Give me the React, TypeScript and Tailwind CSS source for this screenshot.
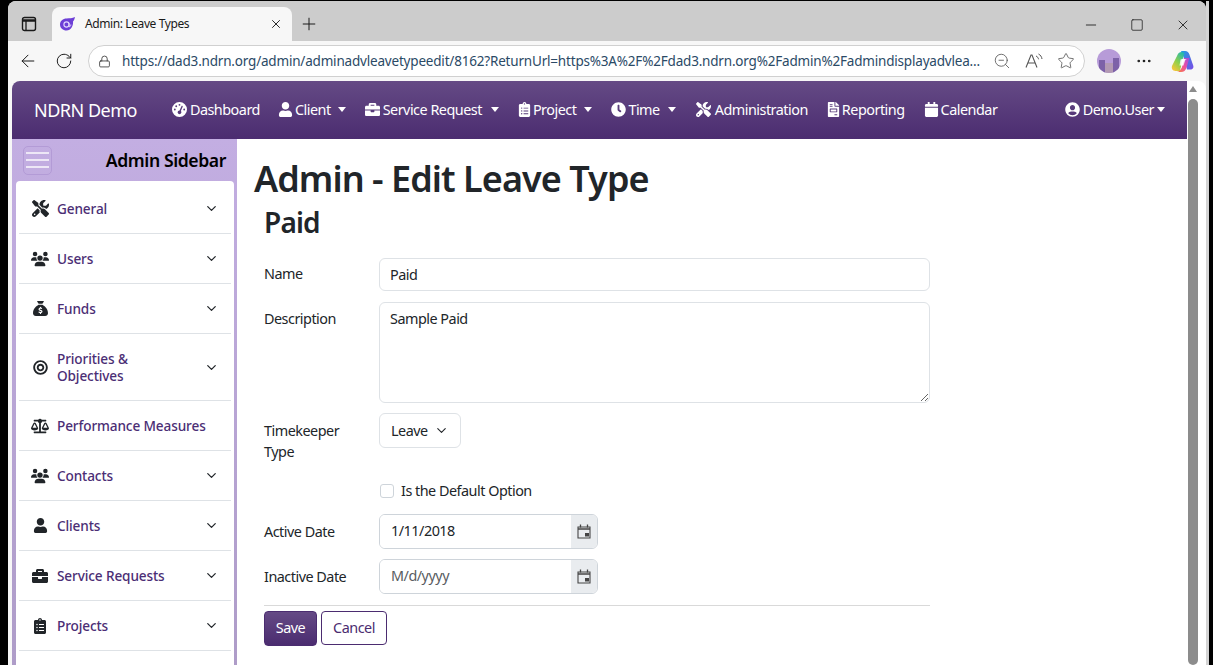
import { ReactNode } from 'react';
import { ArrowLeft, ChevronDown, MoreHorizontal, Plus, RotateCw, Star, X, ZoomOut, Minus, Square, Lock } from 'lucide-react';
import { FaBalanceScale, FaBullseye, FaCalendar, FaClipboardList, FaClock, FaFileInvoice, FaUser, FaUserCircle, FaBriefcase } from 'react-icons/fa';
import { FaGaugeHigh, FaSackDollar, FaScrewdriverWrench, FaUsers } from 'react-icons/fa6';

const font = "font-['Noto_Sans','Open_Sans',sans-serif]";

function Caret({ className }: { className: string }) {
  return <span className={`h-0 w-0 border-x-[4px] border-t-[5px] border-x-transparent border-t-white ${className}`} />;
}

function NavItem({
  icon,
  label,
  caret,
  className,
  iconWidth,
  caretClass = 'ml-[5px]'
}: {
  icon: ReactNode;
  label: string;
  caret?: boolean;
  className: string;
  iconWidth: string;
  caretClass?: string;
}) {
  return (
    <a className={`flex items-center gap-[3px] text-[14.4px] tracking-[-0.5px] text-white ${className}`}>
      <span className={`flex justify-center text-[15px] [&>svg]:shrink-0 ${iconWidth}`}>{icon}</span>
      {label}
      {caret ? <Caret className={caretClass} /> : null}
    </a>
  );
}

function SideItem({
  icon,
  label,
  tall,
  noChevron,
  iconSize = 'text-[15px]',
  className = ''
}: {
  icon: ReactNode;
  label: ReactNode;
  tall?: boolean;
  noChevron?: boolean;
  iconSize?: string;
  className?: string;
}) {
  return (
    <div className={`flex shrink-0 items-center border-b border-[#dee2e6] pl-[12px] pr-[12px] ${tall ? 'h-[67px]' : 'h-[50px]'} ${className}`}>
      <span className={`flex w-[18px] justify-center text-[#212529] [&>svg]:shrink-0 ${iconSize}`}>{icon}</span>
      <span className="ml-[8px] flex-1 text-[13.6px] leading-[17px] font-medium tracking-[-0.12px] text-[#4b2e75]">{label}</span>
      {noChevron ? null : <ChevronDown size={15} strokeWidth={2} className="text-[#212529]" />}
    </div>
  );
}

function CalendarIcon() {
  return (
    <svg width="14" height="15" viewBox="0 0 14 15" className="text-[#444]">
      <path d="M1 3h12v11H1z" fill="none" stroke="currentColor" strokeWidth="1.100" />
      <path d="M1 5h12" stroke="currentColor" strokeWidth="1.500" />
      <path d="M3.500 0.500v3M10.500 0.500v3" stroke="currentColor" strokeWidth="1.300" />
      <rect x="8" y="9" width="4" height="3.500" fill="currentColor" />
    </svg>
  );
}

function DateField({ label, value, muted }: { label: string; value: string; muted?: boolean }) {
  return (
    <div className="flex items-center">
      <label className="w-[115px] pt-[1px] text-[14.4px] tracking-[-0.5px] text-[#212529]">{label}</label>
      <div className="flex h-[35px] w-[219px] overflow-hidden rounded-[6px] border border-[#ced4da]">
        <input
          readOnly
          value={value}
          className={`min-w-0 flex-1 bg-white pl-[11px] text-[14.4px] tracking-[-0.5px] outline-none ${muted ? 'text-[#595c5f]' : 'text-[#212529]'}`}
        />
        <span className="flex w-[26px] items-center justify-center bg-[#e9ecef]">
          <CalendarIcon />
        </span>
      </div>
    </div>
  );
}

export default function App() {
  return (
    <div className={`flex h-[665px] w-[1213px] overflow-hidden bg-black pl-2 pt-px ${font}`}>
      <div className="flex h-[664px] w-[1198px] flex-col overflow-hidden rounded-tl-[8px] rounded-tr-[8px] bg-[#f7f7f7]">
        {/* tab strip */}
        <div className="flex h-[40px] shrink-0 items-end bg-[#cccccc] pl-[13px]">
          <svg width="16" height="16" viewBox="0 0 16 16" className="mb-[9px] text-[#1a1a1a]">
            <rect x="1.500" y="1.500" width="13" height="13" rx="2" fill="none" stroke="currentColor" strokeWidth="1.400" />
            <path d="M1.500 4.500h13" stroke="currentColor" strokeWidth="2.500" />
            <path d="M5 5v9" stroke="currentColor" strokeWidth="1.300" />
          </svg>
          <div className="ml-[15px] flex h-[34px] w-[240px] items-center rounded-t-[8px] bg-[#f7f7f7] pl-[8px] pr-[9px]">
            <svg width="15" height="14" viewBox="0 0 15 14">
              <path d="M6.500 1.500C10 1 12 1.500 15 0c-.5 2.500-1 3.500-2 4.500.6 4-2 9-6.500 9C3 13.500 0 11 0 7.500S3 1.500 6.500 1.500z" fill="#6d3fd6" />
              <circle cx="6.500" cy="7.500" r="2.600" fill="none" stroke="#e4d8ff" strokeWidth="1.100" />
              <path d="M9 6v3.500c1 .5 1.800-.4 1.800-2" fill="none" stroke="#e4d8ff" strokeWidth="1" />
            </svg>
            <span className="ml-[10px] flex-1 text-[12px] tracking-[-0.4px] text-[#1a1a1a]">Admin: Leave Types</span>
            <X size={14} strokeWidth={1.6} className="text-[#1a1a1a]" />
          </div>
          <Plus size={20} strokeWidth={1.2} className="mb-[7px] ml-[7px] text-[#1a1a1a]" />
          <div className="mb-[8px] ml-auto flex items-center gap-[31px] pr-[15px] text-[#1a1a1a]">
            <Minus size={16} strokeWidth={1.3} />
            <Square size={14} strokeWidth={1.3} />
            <X size={16} strokeWidth={1.3} />
          </div>
        </div>
        {/* address bar */}
        <div className="flex h-[40px] shrink-0 items-center pl-[10px]">
          <ArrowLeft size={20} strokeWidth={1.2} className="text-[#1a1a1a]" />
          <RotateCw size={18} strokeWidth={1.3} className="ml-[17px] text-[#1a1a1a]" />
          <div className="ml-[15px] flex h-[32px] w-[997px] items-center rounded-full border border-[#d0d0d0] bg-white pl-[9px]">
            <Lock size={13} strokeWidth={1.5} className="text-[#333]" />
            <span className="ml-[11px] w-[869px] whitespace-nowrap text-[13.5px] tracking-[-0.19px] text-[#2b4a66]">
              https://dad3.ndrn.org/admin/adminadvleavetypeedit/8162?ReturnUrl=https%3A%2F%2Fdad3.ndrn.org%2Fadmin%2Fadmindisplayadvlea...
            </span>
            <ZoomOut size={18} strokeWidth={1.1} className="ml-[2px] text-[#555]" />
            <svg width="18" height="16" viewBox="0 0 18 16" className="ml-[14px] text-[#555]">
              <path d="M1 14.500 6 2h1l5 12.500M3 10h7" fill="none" stroke="currentColor" strokeWidth="1.100" />
              <path d="M11 3c1.500.7 2.300 1.800 2.600 3.300M13.500 1c2 1 3.200 2.800 3.500 5" fill="none" stroke="currentColor" strokeWidth="1" />
            </svg>
            <Star size={18} strokeWidth={1.1} className="ml-[14px] text-[#555]" />
          </div>
          <div className="ml-[12px] flex h-[24px] w-[24px] items-end justify-center overflow-hidden rounded-full bg-[#b79bd8]">
            <span className="mb-0 h-[13px] w-[6px] bg-[#7d62a8]" />
            <span className="h-[10px] w-[8px] bg-[#b39ab4]" />
            <span className="h-[15px] w-[6px] bg-[#7d62a8]" />
          </div>
          <MoreHorizontal size={18} strokeWidth={1.600} className="ml-[14px] text-[#222]" />
          <svg width="23" height="23" viewBox="0 0 23 23" className="ml-[18px]">
            <defs>
              <linearGradient id="cpa" x1="0" y1="0" x2="1" y2="1">
                <stop offset="0" stopColor="#1f9fe0" />
                <stop offset="1" stopColor="#7a4be6" />
              </linearGradient>
              <linearGradient id="cpb" x1="0.800" y1="0" x2="0.200" y2="1">
                <stop offset="0" stopColor="#22b8b0" />
                <stop offset="0.550" stopColor="#8fd04a" />
                <stop offset="1" stopColor="#f8c53a" />
              </linearGradient>
              <linearGradient id="cpc" x1="0" y1="1" x2="1" y2="0">
                <stop offset="0" stopColor="#f9853a" />
                <stop offset="0.500" stopColor="#ee4f9f" />
                <stop offset="1" stopColor="#a04be0" />
              </linearGradient>
            </defs>
            <path d="M10 1h4c2.500 0 3.600 1.200 4.400 3.500l3.800 11c.8 2.400-.6 4-2.800 4H16L12.500 7z" fill="url(#cpa)" />
            <path d="M11 2C8 2 7 3.500 6 6L1.200 15.500C0 18 1.500 21 4.500 21H9l3-13 1.500-5z" fill="url(#cpb)" />
            <path d="M13 8h5.500l-3 9.500C14.500 20.500 13 22 10 22H6c2.500-.5 3.800-2 4.600-5z" fill="url(#cpc)" />
            <path d="M10.500 9h5.500c-2 .3-3 1.500-3.600 3.500L11 17c-.4 1.300-1 2-2 2.400 1-.9 1-2 1.300-3z" fill="#fff" fillOpacity="0.900" />
            <path d="M9.500 9.500h5l-2 6h-4z" fill="#fff" fillOpacity="0.800" />
          </svg>
        </div>
        {/* page */}
        <div className="ml-1 flex min-h-0 flex-1 overflow-hidden rounded-tl-[8px] rounded-tr-[8px] bg-white">
          <div className="flex w-[1175px] shrink-0 flex-col">
            <header className="flex h-[58px] shrink-0 items-center bg-gradient-to-b from-[#654a85] to-[#4b2c70] pl-[22px] text-white">
              <span className="text-[18px] tracking-[-0.5px]">NDRN Demo</span>
              <NavItem className="ml-[35px]" iconWidth="w-[15px]" icon={<FaGaugeHigh />} label="Dashboard" />
              <NavItem className="ml-[20px]" iconWidth="w-[12px]" caretClass="ml-[4px]" icon={<FaUser />} label="Client" caret />
              <NavItem className="ml-[20px]" iconWidth="w-[14px]" caretClass="ml-[6px]" icon={<FaBriefcase />} label="Service Request" caret />
              <NavItem className="ml-[20px]" iconWidth="w-[11px]" icon={<FaClipboardList />} label="Project" caret />
              <NavItem className="ml-[20px]" iconWidth="w-[13px]" icon={<FaClock />} label="Time" caret />
              <NavItem className="ml-[20px]" iconWidth="w-[16px]" icon={<FaScrewdriverWrench />} label="Administration" />
              <NavItem className="ml-[20px]" iconWidth="w-[11px]" icon={<FaFileInvoice />} label="Reporting" />
              <NavItem className="ml-[21px]" iconWidth="w-[12px]" icon={<FaCalendar />} label="Calendar" />
              <NavItem className="ml-auto mr-[22px]" iconWidth="w-[15px]" caretClass="ml-0" icon={<FaUserCircle />} label="Demo.User" caret />
            </header>
            <div className="flex min-h-0 flex-1">
              <aside className="flex w-[225px] shrink-0 flex-col bg-gradient-to-b from-[#c3aee2] to-[#ae9cc8] pl-1 pr-[3px]">
                <div className="flex h-[42px] shrink-0 items-center justify-between pl-[7px] pr-[8px]">
                  <span className="flex h-[29px] w-[29px] flex-col items-center justify-center gap-[5px] rounded-[5px] border border-[#b39bd6]">
                    <span className="h-[2px] w-[23px] bg-white/70" />
                    <span className="h-[2px] w-[23px] bg-white/70" />
                    <span className="h-[2px] w-[23px] bg-white/70" />
                  </span>
                  <span className="text-[17.6px] font-semibold tracking-[-0.4px] text-black">Admin Sidebar</span>
                </div>
                <nav className="flex min-h-0 flex-1 flex-col overflow-hidden rounded-t-[4px] bg-white px-[3px]">
                  <SideItem className="!h-[53px] pt-[3px]" iconSize="text-[17px]" icon={<FaScrewdriverWrench />} label="General" />
                  <SideItem iconSize="text-[18px]" icon={<FaUsers />} label="Users" />
                  <SideItem icon={<FaSackDollar />} label="Funds" />
                  <SideItem tall icon={<FaBullseye />} label={<>Priorities &amp;<br />Objectives</>} />
                  <SideItem noChevron iconSize="text-[18px]" icon={<FaBalanceScale />} label="Performance Measures" />
                  <SideItem iconSize="text-[18px]" icon={<FaUsers />} label="Contacts" />
                  <SideItem icon={<FaUser />} label="Clients" />
                  <SideItem iconSize="text-[16px]" icon={<FaBriefcase />} label="Service Requests" />
                  <SideItem iconSize="text-[16px]" icon={<FaClipboardList />} label="Projects" />
                </nav>
              </aside>
              <main className="min-w-0 flex-1 pl-[17px] text-[#212529]">
                <h1 className="mt-[15px] text-[36px] leading-[49px] font-semibold tracking-[-0.95px]">Admin - Edit Leave Type</h1>
                <div className="ml-[10px] w-[666px]">
                  <h2 className="text-[28px] leading-[38px] font-semibold tracking-[-0.8px]">Paid</h2>
                  <div className="mt-[17px] flex items-center">
                    <label className="w-[115px] pb-[2px] text-[14.4px] tracking-[-0.5px]">Name</label>
                    <input readOnly value="Paid" className="h-[33px] w-[551px] rounded-[6px] border border-[#dee2e6] pb-[1px] pl-[10px] text-[14.4px] tracking-[-0.5px] outline-none" />
                  </div>
                  <div className="mt-[11px] flex items-start">
                    <label className="w-[115px] pt-[6px] text-[14.4px] tracking-[-0.5px]">Description</label>
                    <textarea readOnly value="Sample Paid" className="h-[101px] w-[551px] rounded-[6px] border border-[#dee2e6] pl-[10px] pt-[5px] text-[14.4px] tracking-[-0.5px] outline-none" />
                  </div>
                  <div className="mt-[10px] flex items-start">
                    <label className="w-[115px] pt-[7px] text-[14.4px] leading-[21px] tracking-[-0.5px]">Timekeeper<br />Type</label>
                    <div className="flex h-[35px] w-[82px] items-center justify-between rounded-[6px] border border-[#dee2e6] pl-[11px] pr-[11px] text-[14.4px] tracking-[-0.5px]">
                      Leave
                      <ChevronDown size={15} strokeWidth={1.8} />
                    </div>
                  </div>
                  <div className="ml-[116px] mt-[18px] flex items-center">
                    <input type="checkbox" readOnly className="h-[14px] w-[14px] appearance-none rounded-[3px] border border-[#ced4da] bg-white" />
                    <span className="ml-[7px] text-[14.4px] tracking-[-0.5px]">Is the Default Option</span>
                  </div>
                  <div className="mt-[12px] flex flex-col gap-[10px]">
                    <DateField label="Active Date" value="1/11/2018" />
                    <DateField label="Inactive Date" value="M/d/yyyy" muted />
                  </div>
                  <hr className="mt-[11px] border-[#d9d9d9]" />
                  <div className="mt-[5px] flex items-start gap-1">
                    <button className="h-[35px] w-[53px] rounded-[4px] border border-[#4b2c70] bg-gradient-to-b from-[#654a85] to-[#4b2c70] text-[14.4px] tracking-[-0.5px] text-white">Save</button>
                    <button className="h-[34px] w-[66px] rounded-[4px] border border-[#4b2c70] bg-white text-[14.4px] tracking-[-0.5px] text-[#4b2c70]">Cancel</button>
                  </div>
                </div>
              </main>
            </div>
          </div>
          {/* scrollbar */}
          <div className="flex w-[12px] shrink-0 flex-col items-center bg-white pt-[5px]">
            <span className="h-0 w-0 border-x-[4.5px] border-b-[6px] border-x-transparent border-b-[#8c8c8c]" />
            <span className="mt-[7px] w-[10px] flex-1 rounded-full bg-[#8c8c8c]" />
          </div>
        </div>
      </div>
      <div className="w-[3px] bg-[#d4d4d4]" />
    </div>
  );
}
